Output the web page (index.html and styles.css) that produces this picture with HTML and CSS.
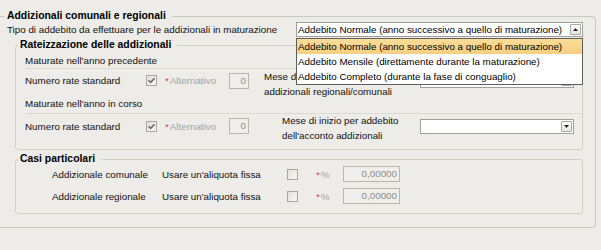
FILE: index.html
```html
<!DOCTYPE html>
<html lang="it">
<head>
<meta charset="utf-8">
<title>Addizionali comunali e regionali</title>
<link rel="stylesheet" href="styles.css">
</head>
<body>
<div class="page">
  <section class="group outer">
    <div class="title t-outer">Addizionali comunali e regionali</div>
    <div class="row row-tipo">
      <span class="lbl lbl-tipo">Tipo di addebito da effettuare per le addizionali in maturazione</span>
      <div class="combo combo-tipo">
        <div class="select">
          <span class="sel-val">Addebito Normale (anno successivo a quello di maturazione)</span>
          <span class="sel-btn"><svg width="5" height="3" viewBox="0 0 5 3"><polygon points="0,3 2.5,0 5,3" fill="#222"/></svg></span>
        </div>
        <ul class="listbox">
          <li class="opt active">Addebito Normale (anno successivo a quello di maturazione)</li>
          <li class="opt">Addebito Mensile (direttamente durante la maturazione)</li>
          <li class="opt">Addebito Completo (durante la fase di conguaglio)</li>
        </ul>
      </div>
    </div>

    <section class="group inner rate">
      <div class="title t-inner">Rateizzazione delle addizionali</div>
      <div class="sub sub-prev">Maturate nell'anno precedente</div>
      <div class="row rate-row r1">
        <span class="lbl lbl-num">Numero rate standard</span>
        <span class="chk"><svg width="9" height="9" viewBox="0 0 9 9"><path d="M1.5 4.3 L3.6 6.4 L7.6 2.2" fill="none" stroke="#6b6b6b" stroke-width="1.6"/></svg></span>
        <span class="alt"><span class="star">*</span>Alternativo</span>
        <span class="field f-num">0</span>
        <span class="mese m1">Mese di inizio per addebito delle<br>addizionali regionali/comunali</span>
        <div class="select sel-mese"><span class="sel-val"></span><span class="sel-btn"><svg width="5" height="3" viewBox="0 0 5 3"><polygon points="0,0 5,0 2.5,3" fill="#222"/></svg></span></div>
      </div>
      <div class="sub sub-cur">Maturate nell'anno in corso</div>
      <div class="row rate-row r2">
        <span class="lbl lbl-num">Numero rate standard</span>
        <span class="chk"><svg width="9" height="9" viewBox="0 0 9 9"><path d="M1.5 4.3 L3.6 6.4 L7.6 2.2" fill="none" stroke="#6b6b6b" stroke-width="1.6"/></svg></span>
        <span class="alt"><span class="star">*</span>Alternativo</span>
        <span class="field f-num">0</span>
        <span class="mese m2">Mese di inizio per addebito<br>dell'acconto addizionali</span>
        <div class="select sel-mese"><span class="sel-val"></span><span class="sel-btn"><svg width="5" height="3" viewBox="0 0 5 3"><polygon points="0,0 5,0 2.5,3" fill="#222"/></svg></span></div>
      </div>
    </section>

    <section class="group inner casi">
      <div class="title t-inner">Casi particolari</div>
      <div class="row casi-row first">
        <span class="lbl lbl-add">Addizionale comunale</span>
        <span class="lbl lbl-usa">Usare un'aliquota fissa</span>
        <span class="chk"></span>
        <span class="pct"><span class="star">*</span>%</span>
        <span class="field f-pct">0,00000</span>
      </div>
      <div class="row casi-row">
        <span class="lbl lbl-add">Addizionale regionale</span>
        <span class="lbl lbl-usa">Usare un'aliquota fissa</span>
        <span class="chk"></span>
        <span class="pct"><span class="star">*</span>%</span>
        <span class="field f-pct">0,00000</span>
      </div>
    </section>
  </section>
</div>
</body>
</html>
```

FILE: styles.css
```css
* { box-sizing: border-box; }
html, body { margin: 0; padding: 0; }
body {
  width: 601px;
  height: 250px;
  overflow: hidden;
  background: #edece8;
  font-family: "Liberation Sans", Arial, sans-serif;
  font-size: 9.8px;
  color: #111;
}
.page { padding-top: 16px; }

.group {
  border: 1px solid #d1cfc6;
  border-radius: 3px;
}
.outer {
  width: 596px;
  height: 212px;
  border-left: none;
  border-radius: 0 4px 4px 0;
  border-color: #cbcac2;
}
.inner {
  width: 568px;
  margin-left: 15px;
}
.rate { height: 105px; margin-top: 8px; }
.casi { height: 55px; margin-top: 9px; }

.title {
  display: table;
  margin-top: -7px;
  line-height: 12px;
  padding: 0 6px 0 2px;
  background: #edece8;
  font-weight: bold;
  font-size: 10.4px;
  color: #000;
  white-space: nowrap;
}
.t-outer { margin-left: 5px; }
.t-inner { margin-left: 2px; }

.row { display: flex; align-items: center; white-space: nowrap; }
.lbl { flex: none; }

.row-tipo { height: 15px; }
.lbl-tipo { width: 296px; padding-left: 7px; }
.combo-tipo { position: relative; width: 287px; flex: none; }

.select {
  height: 15px;
  background: #fff;
  border: 1px solid #a09f99;
  display: flex;
  align-items: center;
  flex: none;
}
.sel-val {
  flex: 1;
  padding-left: 1px;
  line-height: 13px;
  overflow: hidden;
  color: #000;
}
.sel-btn {
  width: 11px;
  height: 11px;
  margin-right: 1px;
  border: 1px solid #aaa9a3;
  border-radius: 1px;
  background: linear-gradient(#fdfdfc, #e7e6e1);
  display: flex;
  align-items: center;
  justify-content: center;
}

.listbox {
  position: absolute;
  left: 0;
  top: 16px;
  width: 287px;
  margin: 0;
  padding: 0;
  list-style: none;
  background: #fff;
  border: 1px solid #5e5e5e;
  z-index: 5;
}
.opt {
  height: 15px;
  line-height: 15px;
  padding-left: 1px;
  color: #000;
}
.opt.active { background: linear-gradient(#fbdc98, #f7cf80); }

.sub {
  line-height: 13px;
  margin-left: 9px;
  border-bottom: 1px solid #dcdad2;
}
.sub-prev { margin-top: 3px; padding-bottom: 1px; }
.sub-cur { margin-top: 5px; padding-bottom: 3px; }

.rate-row { padding-left: 9px; }
.r1 { height: 23px; }
.r2 { height: 24px; }
.lbl-num { width: 121px; line-height: 13px; }

.chk {
  flex: none;
  width: 11px;
  height: 11px;
  border: 1px solid #a8a8a2;
  background: linear-gradient(135deg, #e2e1dc, #f7f7f4);
  display: flex;
  align-items: center;
  justify-content: center;
}
.star { color: #d0385a; margin-right: 1px; }
.alt { flex: none; width: 64px; margin-left: 8px; color: #a4a4a2; }

.field {
  flex: none;
  height: 16px;
  border: 1px solid #b7b6af;
  background: #efeeea;
  color: #8e8e8c;
  text-align: right;
  padding-right: 2px;
  line-height: 14px;
}
.f-num { width: 20px; }

.mese { flex: none; align-self: flex-start; line-height: 15px; }
.m1 { width: 156px; margin-left: 15px; }
.m2 { width: 138px; margin-left: 33px; margin-top: -1px; }
.sel-mese { width: 154px; }

.casi-row { height: 22px; padding-left: 36px; }
.casi-row.first { margin-top: -2px; }
.lbl-add { width: 110px; }
.lbl-usa { width: 125px; }
.pct { flex: none; width: 27px; margin-left: 18px; color: #a4a4a2; }
.f-pct { width: 57px; }
```
